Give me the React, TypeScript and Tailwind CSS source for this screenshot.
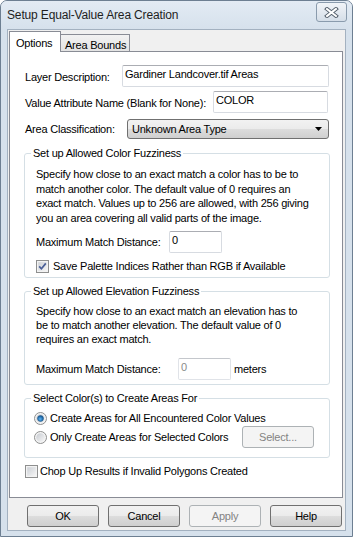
import React from 'react';

const FONT = "font-['Liberation_Sans',Arial,sans-serif]";

const TextBox: React.FC<{ value: string; className: string; disabled?: boolean }> = ({ value, className, disabled }) => (
  <div
    className={`shrink-0 h-[22px] bg-white border border-[#d7dbe1] border-t-[#abadb3] rounded-[2px] flex items-center pl-[2px] pb-[3px] ${disabled ? 'text-[#8a8a8a]' : 'text-black'} ${className}`}
  >
    {value}
  </div>
);

const PushButton: React.FC<{ label: string; disabled?: boolean; className?: string }> = ({ label, disabled, className }) => (
  <div
    className={`shrink-0 w-[72px] h-[22px] rounded-[3px] border flex items-center justify-center ${
      disabled
        ? 'border-[#adb2b5] bg-[#f4f4f4] text-[#838383]'
        : 'border-[#707070] bg-[linear-gradient(to_bottom,#f2f2f2_0%,#ebebeb_50%,#dddddd_50%,#cfcfcf_100%)] text-black'
    } ${className ?? ''}`}
  >
    {label}
  </div>
);

const CheckBox: React.FC<{ checked?: boolean }> = ({ checked }) => (
  <svg width="13" height="13" viewBox="0 0 13 13" className="shrink-0">
    <defs>
      <linearGradient id={checked ? 'cbg1' : 'cbg2'} x1="0" y1="0" x2="1" y2="1">
        <stop offset="0" stopColor="#cbcfd5" />
        <stop offset="1" stopColor="#f6f6f6" />
      </linearGradient>
    </defs>
    <rect x="0.5" y="0.5" width="12" height="12" fill="#f4f4f4" stroke="#8e8f8f" />
    <rect x="2" y="2" width="9" height="9" fill={`url(#${checked ? 'cbg1' : 'cbg2'})`} stroke="#f0f0f0" strokeWidth="0.5" />
    {checked && <path d="M3.2 6.4 L5.4 8.8 L9.8 3.4" fill="none" stroke="#4a5f97" strokeWidth="1.7" />}
  </svg>
);

const Radio: React.FC<{ checked?: boolean; id: string }> = ({ checked, id }) => (
  <svg width="13" height="13" viewBox="0 0 13 13" className="shrink-0">
    <defs>
      <linearGradient id={`${id}o`} x1="0" y1="0" x2="1" y2="1">
        <stop offset="0" stopColor="#c7cbd1" />
        <stop offset="1" stopColor="#f7f7f7" />
      </linearGradient>
      <radialGradient id={`${id}d`} cx="0.45" cy="0.6" r="0.6">
        <stop offset="0" stopColor="#5db6f5" />
        <stop offset="1" stopColor="#0b4d8c" />
      </radialGradient>
    </defs>
    <circle cx="6.5" cy="6.5" r="6" fill="#f4f4f4" stroke="#8e8f8f" />
    <circle cx="6.5" cy="6.5" r="4.3" fill={`url(#${id}o)`} />
    {checked && <circle cx="6.5" cy="6.5" r="3" fill={`url(#${id}d)`} stroke="#2c628b" strokeWidth="0.6" />}
  </svg>
);

const Group: React.FC<{ title: string; className: string; children: React.ReactNode }> = ({ title, className, children }) => (
  <div className={`relative ml-[14px] w-[306px] border border-[#d5dfe5] rounded-[3px] ${className}`}>
    <div className="absolute -top-[8px] left-[6px] bg-white px-[2px] leading-[14px] whitespace-nowrap">{title}</div>
    {children}
  </div>
);

export default function App() {
  return (
    <div className={`${FONT} text-[11px] tracking-[-0.22px] text-black w-[353px] h-[537px] flex flex-col bg-[#d6e1ec] border border-[#6d7f92] rounded-t-[7px] overflow-hidden whitespace-nowrap`}>
      {/* title bar */}
      <div className="h-[28px] flex items-center pl-[6px] pr-[5px] bg-[linear-gradient(to_bottom,#e3ebf4,#d6e1ec)]">
        <span className="text-[12px] text-[#1e1e1e] flex-1 tracking-[-0.15px]">Setup Equal-Value Area Creation</span>
        <div className="mt-[-6px] w-[31px] h-[20px] rounded-[3px] border border-[#8a9bad] bg-[linear-gradient(to_bottom,#f1f4f8,#d5dee8)] flex items-center justify-center">
          <svg width="15" height="11" viewBox="0 0 15 11">
            <path d="M3 2 L12 9 M12 2 L3 9" stroke="#56616d" strokeWidth="4" strokeLinecap="square" />
            <path d="M3 2 L12 9 M12 2 L3 9" stroke="#ffffff" strokeWidth="2" strokeLinecap="square" />
          </svg>
        </div>
      </div>

      {/* client area */}
      <div className="mx-[6px] h-[502px] border border-[#a3b1c0] bg-[#f0f0f0] flex flex-col">
        {/* tabs */}
        <div className="mt-[1px] ml-[1px] h-[20px] flex items-start">
          <div className="relative z-10 w-[52px] h-[21px] bg-white border border-b-0 border-[#898c95] pl-[6px] pt-[3px]">Options</div>
          <div className="mt-[3px] w-[69px] h-[17px] border border-l-0 border-b-0 border-[#898c95] bg-[linear-gradient(to_bottom,#f2f2f2,#e3e3e3)] pl-[4px] pt-[2px]">
            Area Bounds
          </div>
        </div>

        {/* tab panel */}
        <div className="ml-[1px] w-[334px] h-[447px] bg-white border border-[#898c95] flex flex-col">
          <div className="mt-[13px] pl-[15px] flex items-center">
            <span className="w-[97px] shrink-0 mt-[3px]">Layer Description:</span>
            <TextBox value="Gardiner Landcover.tif Areas" className="w-[207px]" />
          </div>
          <div className="mt-[4px] pl-[15px] flex items-center">
            <span className="w-[188px] shrink-0 mt-[3px]">Value Attribute Name (Blank for None):</span>
            <TextBox value="COLOR" className="w-[115px]" />
          </div>
          <div className="mt-[6px] pl-[15px] flex items-center">
            <span className="w-[102px] shrink-0">Area Classification:</span>
            <div className="shrink-0 w-[202px] h-[20px] rounded-[3px] border border-[#707070] bg-[linear-gradient(to_bottom,#f2f2f2_0%,#ebebeb_50%,#dddddd_50%,#cfcfcf_100%)] flex items-center pl-[4px] pr-[6px]">
              <span className="flex-1">Unknown Area Type</span>
              <svg width="7" height="4" viewBox="0 0 7 4">
                <path d="M0 0 H7 L3.5 4 Z" fill="#000" />
              </svg>
            </div>
          </div>

          <Group title="Set up Allowed Color Fuzziness" className="mt-[14px] h-[125px] shrink-0">
            <div className="pt-[13px] pl-[11px] leading-[14.5px]">
              <div>Specify how close to an exact match a color has to be to</div>
              <div>match another color. The default value of 0 requires an</div>
              <div>exact match. Values up to 256 are allowed, with 256 giving</div>
              <div>you an area covering all valid parts of the image.</div>
            </div>
            <div className="mt-[6px] pl-[11px] flex items-center">
              <span className="w-[133px] shrink-0">Maximum Match Distance:</span>
              <TextBox value="0" className="w-[53px]" />
            </div>
            <div className="mt-[5px] pl-[11px] flex items-center gap-[4px]">
              <CheckBox checked />
              <span>Save Palette Indices Rather than RGB if Available</span>
            </div>
          </Group>

          <Group title="Set up Allowed Elevation Fuzziness" className="mt-[13px] h-[94px] shrink-0">
            <div className="pt-[12px] pl-[11px] leading-[14px]">
              <div>Specify how close to an exact match an elevation has to</div>
              <div>be to match another elevation. The default value of 0</div>
              <div>requires an exact match.</div>
            </div>
            <div className="mt-[12px] pl-[11px] flex items-center">
              <span className="w-[142px] shrink-0">Maximum Match Distance:</span>
              <TextBox value="0" className="w-[53px] border-[#e0e3e8] border-t-[#c4c7cc]" disabled />
              <span className="ml-[3px]">meters</span>
            </div>
          </Group>

          <Group title="Select Color(s) to Create Areas For" className="mt-[13px] h-[60px] shrink-0">
            <div className="mt-[12px] pl-[9px] flex items-center gap-[3px] h-[14px]">
              <Radio checked id="r1" />
              <span>Create Areas for All Encountered Color Values</span>
            </div>
            <div className="mt-[1px] pl-[9px] flex items-center h-[22px]">
              <div className="w-[208px] shrink-0 flex items-center gap-[3px]">
                <Radio id="r2" />
                <span>Only Create Areas for Selected Colors</span>
              </div>
              <PushButton label="Select..." disabled />
            </div>
          </Group>

          <div className="mt-[7px] pl-[15px] flex items-center gap-[2px] h-[13px]">
            <CheckBox />
            <span>Chop Up Results if Invalid Polygons Created</span>
          </div>
        </div>

        {/* bottom buttons */}
        <div className="mt-[7px] pl-[19px] flex gap-[9px]">
          <PushButton label="OK" />
          <PushButton label="Cancel" />
          <PushButton label="Apply" disabled />
          <PushButton label="Help" />
        </div>
      </div>
    </div>
  );
}
